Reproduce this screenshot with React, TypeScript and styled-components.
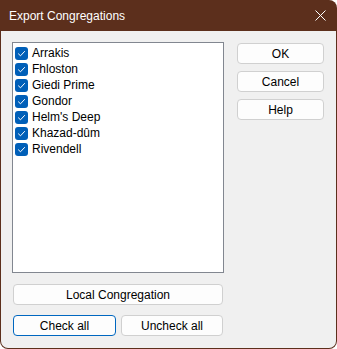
import React from "react";
import styled, { createGlobalStyle } from "styled-components";

const GlobalStyle = createGlobalStyle`
  html, body {
    margin: 0;
    padding: 0;
    background: #ffffff;
  }
  body {
    font-family: "Segoe UI", "Liberation Sans", Arial, sans-serif;
    font-size: 12px;
    color: #000000;
  }
`;

const congregations = [
  "Arrakis",
  "Fhloston",
  "Giedi Prime",
  "Gondor",
  "Helm's Deep",
  "Khazad-dûm",
  "Rivendell",
];

// Window frame
const Window = styled.div`
  width: 337px;
  height: 349px;
  box-sizing: border-box;
  background: #5c2f1c;
  border-radius: 0 8px 8px 8px;
  padding: 0 1px 1px 1px;
  display: flex;
  flex-direction: column;
  overflow: hidden;
`;

const TitleBar = styled.div`
  height: 31px;
  flex-shrink: 0;
  display: flex;
  align-items: center;
  justify-content: space-between;
  padding: 0 10px 0 8px;
  color: #ffffff;
  font-size: 12px;
`;

const CloseButton = styled.button`
  background: none;
  border: none;
  padding: 0;
  width: 12px;
  height: 12px;
  display: flex;
  align-items: center;
  justify-content: center;
  cursor: pointer;
`;

const Body = styled.div`
  flex: 1;
  background: #f0f0f0;
  border-radius: 0 0 7px 7px;
  padding: 11px 0 0 11px;
  display: flex;
  gap: 13px;
`;

const LeftColumn = styled.div`
  width: 212px;
  display: flex;
  flex-direction: column;
`;

const ListBox = styled.div`
  height: 231px;
  box-sizing: border-box;
  border: 1px solid #828790;
  background: #ffffff;
  padding: 2px 2px;
  display: flex;
  flex-direction: column;
`;

const ListItem = styled.label`
  height: 16px;
  display: flex;
  align-items: center;
  gap: 4px;
  line-height: 16px;
  white-space: nowrap;
`;

const CheckBox = styled.span`
  width: 13px;
  height: 13px;
  box-sizing: border-box;
  border-radius: 3px;
  background: #005fb8;
  display: flex;
  align-items: center;
  justify-content: center;
  flex-shrink: 0;
`;

const Button = styled.button<{ $focused?: boolean }>`
  height: 21px;
  box-sizing: border-box;
  padding: 0;
  background: #fdfdfd;
  border: 1px solid ${(p) => (p.$focused ? "#0067c0" : "#d0d0d0")};
  border-radius: 4px;
  font-family: inherit;
  font-size: 12px;
  color: #000000;
  cursor: pointer;
`;

const WideButton = styled(Button)`
  margin: 11px 1px 0 1px;
`;

const ButtonRow = styled.div`
  margin: 10px 1px 0 1px;
  display: grid;
  grid-template-columns: 103px 102px;
  gap: 5px;
`;

const RightColumn = styled.div`
  width: 87px;
  padding-top: 1px;
  display: flex;
  flex-direction: column;
  gap: 7px;
`;

const CheckMark = () => (
  <svg width="9" height="9" viewBox="0 0 9 9">
    <path d="M1.2 4.6 L3.5 6.8 L7.8 2.2" fill="none" stroke="#ffffff" strokeWidth="1" />
  </svg>
);

const App: React.FC = () => {
  return (
    <>
      <GlobalStyle />
      <Window>
        <TitleBar>
          <span>Export Congregations</span>
          <CloseButton type="button" aria-label="Close">
            <svg width="11" height="11" viewBox="0 0 11 11">
              <path d="M0.5 0.5 L10.5 10.5 M10.5 0.5 L0.5 10.5" stroke="#ffffff" strokeWidth="1" />
            </svg>
          </CloseButton>
        </TitleBar>
        <Body>
          <LeftColumn>
            <ListBox>
              {congregations.map((name) => (
                <ListItem key={name}>
                  <CheckBox>
                    <CheckMark />
                  </CheckBox>
                  {name}
                </ListItem>
              ))}
            </ListBox>
            <WideButton type="button">Local Congregation</WideButton>
            <ButtonRow>
              <Button type="button" $focused>
                Check all
              </Button>
              <Button type="button">Uncheck all</Button>
            </ButtonRow>
          </LeftColumn>
          <RightColumn>
            <Button type="button">OK</Button>
            <Button type="button">Cancel</Button>
            <Button type="button">Help</Button>
          </RightColumn>
        </Body>
      </Window>
    </>
  );
};

export default App;
